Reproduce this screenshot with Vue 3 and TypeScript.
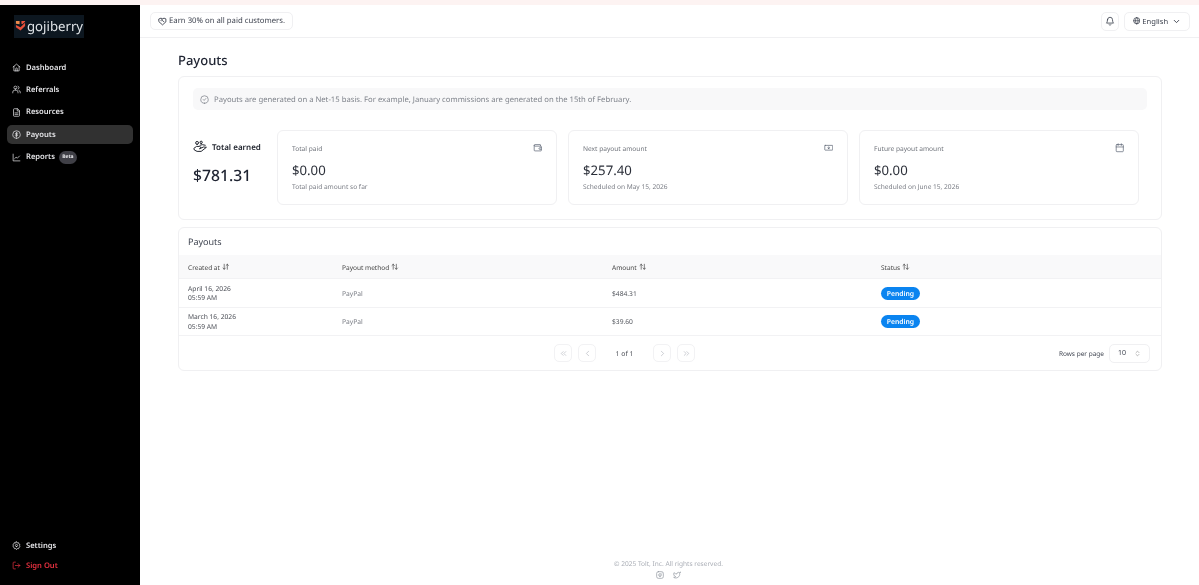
<script setup lang="ts">
interface NavItem { label: string; icon: string; active?: boolean; badge?: string }
interface Stat { label: string; value: string; note: string; icon: string }
interface Row { date: string; time: string; method: string; amount: string; status: string }

const nav: NavItem[] = [
  { label: 'Dashboard', icon: 'M3 10.5 12 3l9 7.5M5 9v12h14V9M10 21v-6a2 2 0 0 1 4 0v6' },
  { label: 'Referrals', icon: 'M9 11a4 4 0 1 0 0-8 4 4 0 0 0 0 8ZM2 21v-2a5 5 0 0 1 5-5h4a5 5 0 0 1 5 5v2M16 3.2a4 4 0 0 1 0 7.6M22 21v-2a5 5 0 0 0-3.5-4.7' },
  { label: 'Resources', icon: 'M14 2H6a2 2 0 0 0-2 2v16a2 2 0 0 0 2 2h12a2 2 0 0 0 2-2V8ZM14 2v6h6M8 13h8M8 17h8' },
  { label: 'Payouts', active: true, icon: 'M12 22a10 10 0 1 0 0-20 10 10 0 0 0 0 20ZM15.5 8.5h-5a1.8 1.8 0 0 0 0 3.5h3a1.8 1.8 0 0 1 0 3.5h-5M12 6v12' },
  { label: 'Reports', badge: 'Beta', icon: 'M3 3v18h18M7 15l4-4 3 3 6-6' }
]

const stats: Stat[] = [
  { label: 'Total paid', value: '$0.00', note: 'Total paid amount so far', icon: 'M19 7V5a1 1 0 0 0-1-1H5a2 2 0 0 0 0 4h15a1 1 0 0 1 1 1v10a1 1 0 0 1-1 1H5a2 2 0 0 1-2-2V6M21 12h-4a2 2 0 0 0 0 4h4' },
  { label: 'Next payout amount', value: '$257.40', note: 'Scheduled on May 15, 2026', icon: 'M3 6h18a1 1 0 0 1 1 1v10a1 1 0 0 1-1 1H3a1 1 0 0 1-1-1V7a1 1 0 0 1 1-1ZM12 14a2 2 0 1 0 0-4 2 2 0 0 0 0 4Z' },
  { label: 'Future payout amount', value: '$0.00', note: 'Scheduled on June 15, 2026', icon: 'M5 4h14a2 2 0 0 1 2 2v14a2 2 0 0 1-2 2H5a2 2 0 0 1-2-2V6a2 2 0 0 1 2-2ZM16 2v4M8 2v4M3 10h18' }
]

const rows: Row[] = [
  { date: 'April 16, 2026', time: '05:59 AM', method: 'PayPal', amount: '$484.31', status: 'Pending' },
  { date: 'March 16, 2026', time: '05:59 AM', method: 'PayPal', amount: '$39.60', status: 'Pending' }
]

const columns = ['Payout method', 'Amount', 'Status']
</script>

<template>
  <div class="page">
    <div class="strip"></div>
    <div class="shell">
      <aside class="sidebar">
        <div class="logo">
          <svg class="logo-mark" viewBox="0 0 12 12" width="11" height="11">
            <path d="M1 5.500 6 8l5-5v3.500L6 11.500 1 8Z" fill="#e8503a" />
            <path d="M1 1h4v3.500L1 4Z" fill="#ee8a4a" />
            <path d="M7 1h4v1L8 4.500 7 4Z" fill="#e8503a" />
          </svg>
          <span>gojiberry</span>
        </div>
        <nav class="nav">
          <a v-for="item in nav" :key="item.label" class="nav-item" :class="{ active: item.active }">
            <svg viewBox="0 0 24 24" class="nav-icon"><path :d="item.icon" /></svg>
            <span>{{ item.label }}</span>
            <span v-if="item.badge" class="beta">{{ item.badge }}</span>
          </a>
        </nav>
        <div class="side-bottom">
          <a class="nav-item">
            <svg viewBox="0 0 24 24" class="nav-icon"><path d="M12 15a3 3 0 1 0 0-6 3 3 0 0 0 0 6ZM12 2l2 3 3.500-.5 1 3.500 3 2-1.500 2.500 1.500 2.500-3 2-1 3.500-3.500-.5-2 3-2-3-3.500.5-1-3.500-3-2L3.500 12.500 2 10l3-2 1-3.500L9.500 5Z" /></svg>
            <span>Settings</span>
          </a>
          <a class="nav-item signout">
            <svg viewBox="0 0 24 24" class="nav-icon"><path d="M9 21H5a2 2 0 0 1-2-2V5a2 2 0 0 1 2-2h4M16 17l5-5-5-5M21 12H9" /></svg>
            <span>Sign Out</span>
          </a>
        </div>
      </aside>

      <div class="main">
        <header class="topbar">
          <div class="earn">
            <svg viewBox="0 0 24 24" class="earn-icon"><path d="M3 5l5-2 4 2 4-2 5 2v8l-9 8-9-8ZM12 5 8 9l2 2 2-2 4 4" /></svg>
            <span>Earn 30% on all paid customers.</span>
          </div>
          <div class="top-actions">
            <button class="bell">
              <svg viewBox="0 0 24 24"><path d="M6 9a6 6 0 0 1 12 0c0 6 2.500 8 2.500 8h-17S6 15 6 9ZM10 21a2.200 2.200 0 0 0 4 0" /></svg>
            </button>
            <button class="lang">
              <svg viewBox="0 0 24 24" class="globe"><path d="M12 22a10 10 0 1 0 0-20 10 10 0 0 0 0 20ZM2 12h20M12 2c3 3 4 6 4 10s-1 7-4 10c-3-3-4-6-4-10s1-7 4-10Z" /></svg>
              <span>English</span>
              <svg viewBox="0 0 24 24" class="chev"><path d="m6 9 6 6 6-6" /></svg>
            </button>
          </div>
        </header>

        <main class="content">
          <h1>Payouts</h1>

          <section class="card summary">
            <div class="notice">
              <svg viewBox="0 0 24 24"><path d="M12 22a10 10 0 1 0 0-20 10 10 0 0 0 0 20ZM8.500 12l2.500 2.500 4.500-5" /></svg>
              <span>Payouts are generated on a Net-15 basis. For example, January commissions are generated on the 15th of February.</span>
            </div>
            <div class="stats">
              <div class="total">
                <div class="total-label">
                  <svg viewBox="0 0 24 24"><path d="M7 7.500a2.500 2.500 0 1 0 0-5 2.500 2.500 0 0 0 0 5ZM14 6a2 2 0 1 0 0-4 2 2 0 0 0 0 4ZM2 14l4-3h5l3 2-3 2 7-3 5 .5-9 7H7l-4-2ZM12 9l4-1 5 1" /></svg>
                  <span>Total earned</span>
                </div>
                <div class="total-value">$781.31</div>
              </div>
              <div v-for="stat in stats" :key="stat.label" class="stat">
                <div class="stat-head">
                  <span>{{ stat.label }}</span>
                  <svg viewBox="0 0 24 24"><path :d="stat.icon" /></svg>
                </div>
                <div class="stat-value">{{ stat.value }}</div>
                <div class="stat-note">{{ stat.note }}</div>
              </div>
            </div>
          </section>

          <section class="card table-card">
            <div class="table-title">Payouts</div>
            <div class="tr thead">
              <div class="cell">Created at
                <svg class="sort" viewBox="0 0 24 24"><path d="M7 4v16M3 16l4 4 4-4M17 20V4M13 8l4-4 4 4" /></svg>
              </div>
              <div v-for="col in columns" :key="col" class="cell">{{ col }}
                <svg class="sort" viewBox="0 0 24 24"><path d="M7 20V4M3 8l4-4 4 4M17 4v16M13 16l4 4 4-4" /></svg>
              </div>
            </div>
            <div v-for="row in rows" :key="row.date" class="tr tbody">
              <div class="cell date"><div>{{ row.date }}</div><div>{{ row.time }}</div></div>
              <div class="cell muted">{{ row.method }}</div>
              <div class="cell amount">{{ row.amount }}</div>
              <div class="cell"><span class="pill">{{ row.status }}</span></div>
            </div>
            <div class="pager">
              <div class="pages">
                <button class="pg"><svg viewBox="0 0 24 24"><path d="m11 17-5-5 5-5M18 17l-5-5 5-5" /></svg></button>
                <button class="pg"><svg viewBox="0 0 24 24"><path d="m15 18-6-6 6-6" /></svg></button>
                <span class="of">1 of 1</span>
                <button class="pg"><svg viewBox="0 0 24 24"><path d="m9 18 6-6-6-6" /></svg></button>
                <button class="pg"><svg viewBox="0 0 24 24"><path d="m6 17 5-5-5-5M13 17l5-5-5-5" /></svg></button>
              </div>
              <div class="per-page">
                <span>Rows per page</span>
                <div class="select">
                  <span>10</span>
                  <svg viewBox="0 0 24 24"><path d="m7 9 5-5 5 5M7 15l5 5 5-5" /></svg>
                </div>
              </div>
            </div>
          </section>
        </main>

        <footer class="footer">
          <div>© 2025 Tolt, Inc. All rights reserved.</div>
          <div class="socials">
            <svg viewBox="0 0 24 24"><path d="M7 2h10a5 5 0 0 1 5 5v10a5 5 0 0 1-5 5H7a5 5 0 0 1-5-5V7a5 5 0 0 1 5-5ZM12 16a4 4 0 1 0 0-8 4 4 0 0 0 0 8ZM17.500 6.500h.01" /></svg>
            <svg viewBox="0 0 24 24"><path d="M22 4s-.7 2.100-2 3.400c1.600 10-9.400 17.300-18 11.600 2.200.1 4.400-.6 6-2C3 15.500.5 9.600 3 5c2.200 2.600 5.600 4.100 9 4-.9-4.200 4-6.600 7-3.800 1.100 0 3-1.200 3-1.200Z" /></svg>
          </div>
        </footer>
      </div>
    </div>
  </div>
</template>

<style scoped>
.page {
  width: 1199px;
  height: 585px;
  overflow: hidden;
  display: flex;
  flex-direction: column;
  font-family: "Noto Sans", "Open Sans", sans-serif;
  text-rendering: geometricPrecision;
  will-change: transform;
  color: #1f2430;
  background: #fff;
}
svg {
  fill: none;
  stroke: currentColor;
  stroke-width: 2;
  stroke-linecap: round;
  stroke-linejoin: round;
  flex: none;
}
.strip { height: 5px; background: #fdf3f2; flex: none; }
.shell { flex: 1; display: flex; min-height: 0; }

/* sidebar */
.sidebar {
  width: 140px;
  flex: none;
  background: #000;
  color: #e8e8ea;
  display: flex;
  flex-direction: column;
  padding: 10px 7px 10px;
  box-sizing: border-box;
}
.logo {
  margin-left: 7px;
  width: 70px;
  height: 23px;
  background: #0d1720;
  display: flex;
  align-items: center;
  gap: 1px;
  font-size: 13.200px;
  line-height: 20px;
  color: #dfe3e6;
  padding: 0 0 2px 1px;
  box-sizing: border-box;
  margin-bottom: 20px;
}
.logo-mark { stroke: none; }
.nav { display: flex; flex-direction: column; gap: 3.400px; }
.nav-item {
  display: flex;
  align-items: center;
  height: 19px;
  padding: 0 5px;
  gap: 5px;
  font-size: 7.600px;
  font-weight: 600;
  border-radius: 5px;
  color: #e4e4e7;
}
.nav-item.active { background: #313131; }
.nav-icon { width: 9px; height: 9px; stroke-width: 1.900; }
.beta {
  background: #3f3f46;
  color: #e4e4e7;
  font-size: 5px;
  font-weight: 700;
  border-radius: 7px;
  width: 18px;
  height: 13px;
  display: flex;
  align-items: center;
  justify-content: center;
  margin-left: -1px;
}
.side-bottom { margin-top: auto; display: flex; flex-direction: column; gap: 1px; }
.signout { color: #e5303f; }

/* top bar */
.main { flex: 1; min-width: 0; display: flex; flex-direction: column; }
.topbar {
  height: 33px;
  flex: none;
  box-sizing: border-box;
  border-bottom: 1px solid #f0f0f2;
  display: flex;
  align-items: center;
  justify-content: space-between;
  padding: 0 9px 0 10px;
}
.earn {
  height: 18px;
  box-sizing: border-box;
  border: 1px solid #f0f0f2;
  border-radius: 5px;
  display: flex;
  align-items: center;
  gap: 2px;
  padding: 0 7px;
  font-size: 7.750px;
  color: #3f4450;
}
.earn-icon { width: 9px; height: 9px; stroke-width: 2.400; }
.top-actions { display: flex; align-items: center; gap: 5px; }
.bell, .lang {
  height: 19px;
  background: #fff;
  border: 1px solid #f0f0f2;
  border-radius: 5px;
  display: flex;
  align-items: center;
  justify-content: center;
  padding: 0;
  font-family: inherit;
  color: #3f4450;
}
.bell { width: 18px; }
.bell svg { width: 10px; height: 10px; }
.lang { width: 66px; gap: 2px; font-size: 7.600px; }
.globe { width: 7.500px; height: 7.500px; stroke-width: 2.400; }
.chev { width: 9px; height: 9px; margin-left: 2px; stroke-width: 2.500; }

/* content */
.content {
  flex: 1;
  padding: 0 37px 0 38px;
  min-height: 0;
}
h1 {
  margin: 0;
  font-size: 13px;
  font-weight: 500;
  line-height: 20px;
  padding-top: 12px;
  margin-bottom: 6px;
  color: #1d2230;
}
.card {
  border: 1px solid #f0f0f2;
  border-radius: 6px;
  background: #fff;
  box-sizing: border-box;
}
.summary { height: 144px; padding: 11px 14px; margin-bottom: 7px; }
.notice {
  height: 22px;
  background: #f8f8f9;
  border-radius: 5px;
  display: flex;
  align-items: center;
  gap: 5px;
  padding: 1px 7px 0;
  box-sizing: border-box;
  font-size: 7.700px;
  color: #7f838b;
}
.notice svg { width: 9px; height: 9px; }
.stats { display: flex; margin-top: 20px; }
.total { width: 84px; flex: none; padding-top: 10px; }
.total-label {
  display: flex;
  align-items: center;
  gap: 5px;
  font-size: 8px;
  font-weight: 600;
  color: #20242e;
}
.total-label svg { width: 14px; height: 14px; stroke-width: 1.700; }
.total-value { font-size: 15.700px; font-weight: 500; margin-top: 9px; line-height: 24px; color: #1d2230; }
.stat {
  width: 280px;
  height: 75px;
  flex: none;
  box-sizing: border-box;
  border: 1px solid #f0f0f2;
  border-radius: 6px;
  padding: 11px 14px;
  margin-right: 11px;
}
.stat-head {
  display: flex;
  justify-content: space-between;
  align-items: center;
  font-size: 6.600px;
  color: #6f737b;
  height: 12px;
}
.stat-head svg { width: 9.500px; height: 9.500px; color: #5d6675; stroke-width: 1.800; }
.stat-value { font-size: 13.200px; line-height: 20px; margin-top: 6px; color: #2a2e38; }
.stat-note { font-size: 6.600px; color: #7a7d85; margin-top: 1px; line-height: 12px; }

/* table */
.table-card { height: 144px; display: flex; flex-direction: column; }
.table-title {
  height: 27px;
  flex: none;
  display: flex;
  align-items: center;
  padding-left: 9px;
  font-size: 9px;
  color: #3f4450;
}
.tr {
  display: grid;
  grid-template-columns: 154px 270px 269px 1fr;
  align-items: center;
  padding: 1px 0 0 9px;
  border-bottom: 1px solid #f2f2f4;
  box-sizing: border-box;
  flex: none;
}
.thead { height: 24px; background: #f9f9fa; font-size: 6.550px; color: #444; }
.tbody { height: 28.500px; font-size: 6.700px; color: #4a4d55; }
.cell { display: flex; align-items: center; gap: 2px; }
.date { flex-direction: column; align-items: flex-start; gap: 0; line-height: 9.500px; }
.muted { color: #7a7d85; }
.amount { color: #55585f; }
.sort { width: 7.500px; height: 7.500px; color: #333; }
.pill {
  background: #0a84f0;
  color: #fff;
  font-size: 6.800px;
  font-weight: 600;
  border-radius: 7px;
  height: 13px;
  width: 39px;
  display: flex;
  align-items: center;
  justify-content: center;
}
.pager {
  flex: 1;
  position: relative;
  display: flex;
  align-items: center;
  justify-content: flex-end;
  padding-right: 11px;
}
.pages {
  position: absolute;
  left: 375px;
  top: 8px;
  display: flex;
  align-items: center;
  gap: 6px;
}
.pg {
  width: 18px;
  height: 18px;
  background: #fff;
  border: 1px solid #f2f2f4;
  border-radius: 5px;
  display: flex;
  align-items: center;
  justify-content: center;
  padding: 0;
  color: #a8acb4;
}
.pg svg { width: 9px; height: 9px; stroke-width: 1.500; }
.of { width: 45px; text-align: center; font-size: 6.800px; color: #4a4d55; }
.per-page { display: flex; align-items: center; gap: 5px; font-size: 6.500px; color: #3f4450; }
.select {
  width: 41px;
  height: 19px;
  box-sizing: border-box;
  border: 1px solid #f0f0f2;
  border-radius: 5px;
  display: flex;
  align-items: center;
  justify-content: space-between;
  padding: 0 8px;
  font-size: 7px;
}
.select svg { width: 7px; height: 7px; color: #888; }

/* footer */
.footer {
  flex: none;
  height: 26px;
  padding-right: 2px;
  text-align: center;
  font-size: 6.550px;
  color: #a9adb5;
}
.socials {
  display: flex;
  justify-content: center;
  gap: 9px;
  margin-top: 3px;
  color: #8d929b;
}
.socials svg { width: 8px; height: 8px; }
</style>
